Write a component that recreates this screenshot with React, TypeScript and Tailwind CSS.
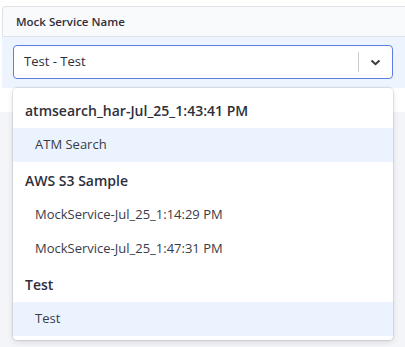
import React from "react";

type Group = { label: string; options: { label: string; active?: boolean }[] };

const groups: Group[] = [
  { label: "atmsearch_har-Jul_25_1:43:41 PM", options: [{ label: "ATM Search", active: true }] },
  {
    label: "AWS S3 Sample",
    options: [{ label: "MockService-Jul_25_1:14:29 PM" }, { label: "MockService-Jul_25_1:47:31 PM" }],
  },
  { label: "Test", options: [{ label: "Test", active: true }] },
];

const App = () => {
  return (
    <div
      className="relative h-[347px] w-[405px] overflow-hidden bg-white"
      style={{ fontFamily: '"Open Sans", "Noto Sans", sans-serif' }}
    >
      <div className="pt-[6px] pl-[2px]">
        <div className="flex h-[31px] items-center rounded-tl-[4px] border border-r-0 border-[#dfe3e8] bg-[#f9fafc] pl-[13px] text-[11.5px] font-semibold text-[#2e2f3a]">
          Mock Service Name
        </div>
        <div className="h-[51px] bg-[#eef4fd] px-[11px] pt-[8px]">
          <div className="flex h-[34px] w-[380px] items-center rounded-[4px] border border-[#5b7ee5] bg-white">
            <span className="flex-1 pl-[10px] text-[13px] text-[#2e2f3a]">Test - Test</span>
            <span className="h-[20px] w-px bg-[#cccccc]" />
            <span className="flex w-[33px] items-center justify-center">
              <svg width="11" height="7" viewBox="0 0 11 7" fill="none">
                <path d="M1.5 1.5 L5.5 5.2 L9.5 1.5" stroke="#3a3a3a" strokeWidth="2" />
              </svg>
            </span>
          </div>
        </div>
      </div>
      <div className="mt-[24px] h-full bg-[#f4f5f8]" />

      <div className="absolute left-[13px] top-[88px] w-[380px] rounded-[4px] bg-white py-[4px] shadow-[0_0_0_1px_rgba(0,0,0,0.08),0_2px_6px_rgba(0,0,0,0.12)]">
        {groups.map((g) => (
          <div key={g.label}>
            <div className="flex h-[36px] items-center pl-[12px] text-[14px] font-semibold text-[#2e2f3a]">
              {g.label}
            </div>
            {g.options.map((o) => (
              <div
                key={o.label}
                className={`flex h-[34px] items-center pl-[22px] text-[13px] text-[#3a3b48] ${
                  o.active ? "bg-[#ebf4fe]" : ""
                }`}
              >
                {o.label}
              </div>
            ))}
          </div>
        ))}
      </div>
    </div>
  );
};

export default App;
